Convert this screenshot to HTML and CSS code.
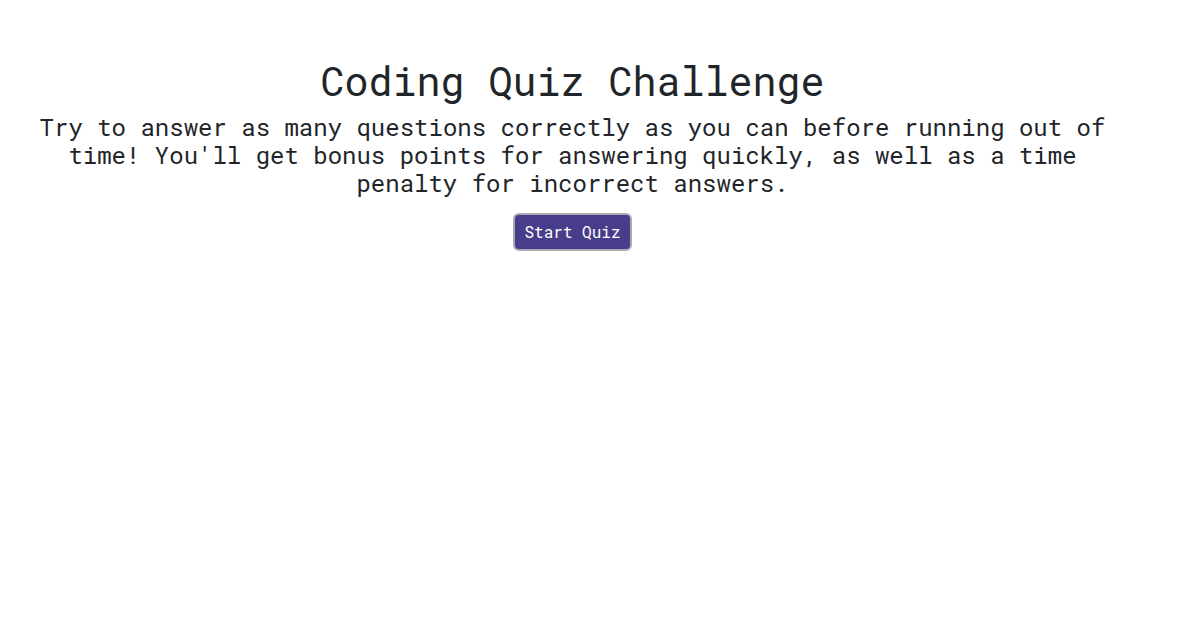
FILE: index.html
```html
<!DOCTYPE html>
<html lang="en">
<head>
<meta charset="utf-8">
<title>Coding Quiz Challenge</title>
<link rel="stylesheet" href="styles.css">
</head>
<body>
<main class="quiz">
  <h1 class="quiz-title">Coding Quiz Challenge</h1>
  <p class="quiz-intro">Try to answer as many questions correctly as you can before running out of time! You'll get bonus points for answering quickly, as well as a time penalty for incorrect answers.</p>
  <button class="start-btn" type="button">Start Quiz</button>
</main>
</body>
</html>
```
FILE: styles.css
```css
body {
  margin: 0;
  padding: 0 22px;
  background: #fff;
  color: #212529;
  font-family: "Roboto Mono", "DejaVu Sans Mono", monospace;
}
.quiz {
  width: 1101px;
  display: flex;
  flex-direction: column;
  align-items: center;
  text-align: center;
  padding-top: 55px;
}
.quiz-title {
  margin: 0;
  font-size: 40px;
  font-weight: 400;
  line-height: 52px;
}
.quiz-intro {
  margin: 6px 0 16px;
  font-size: 24px;
  line-height: 28px;
}
.start-btn {
  font-family: inherit;
  font-size: 16px;
  color: #fff;
  background: #483d8b;
  border: 2px solid #a9a9b4;
  border-radius: 6px;
  padding: 7px 9px;
  line-height: 20px;
}
```
